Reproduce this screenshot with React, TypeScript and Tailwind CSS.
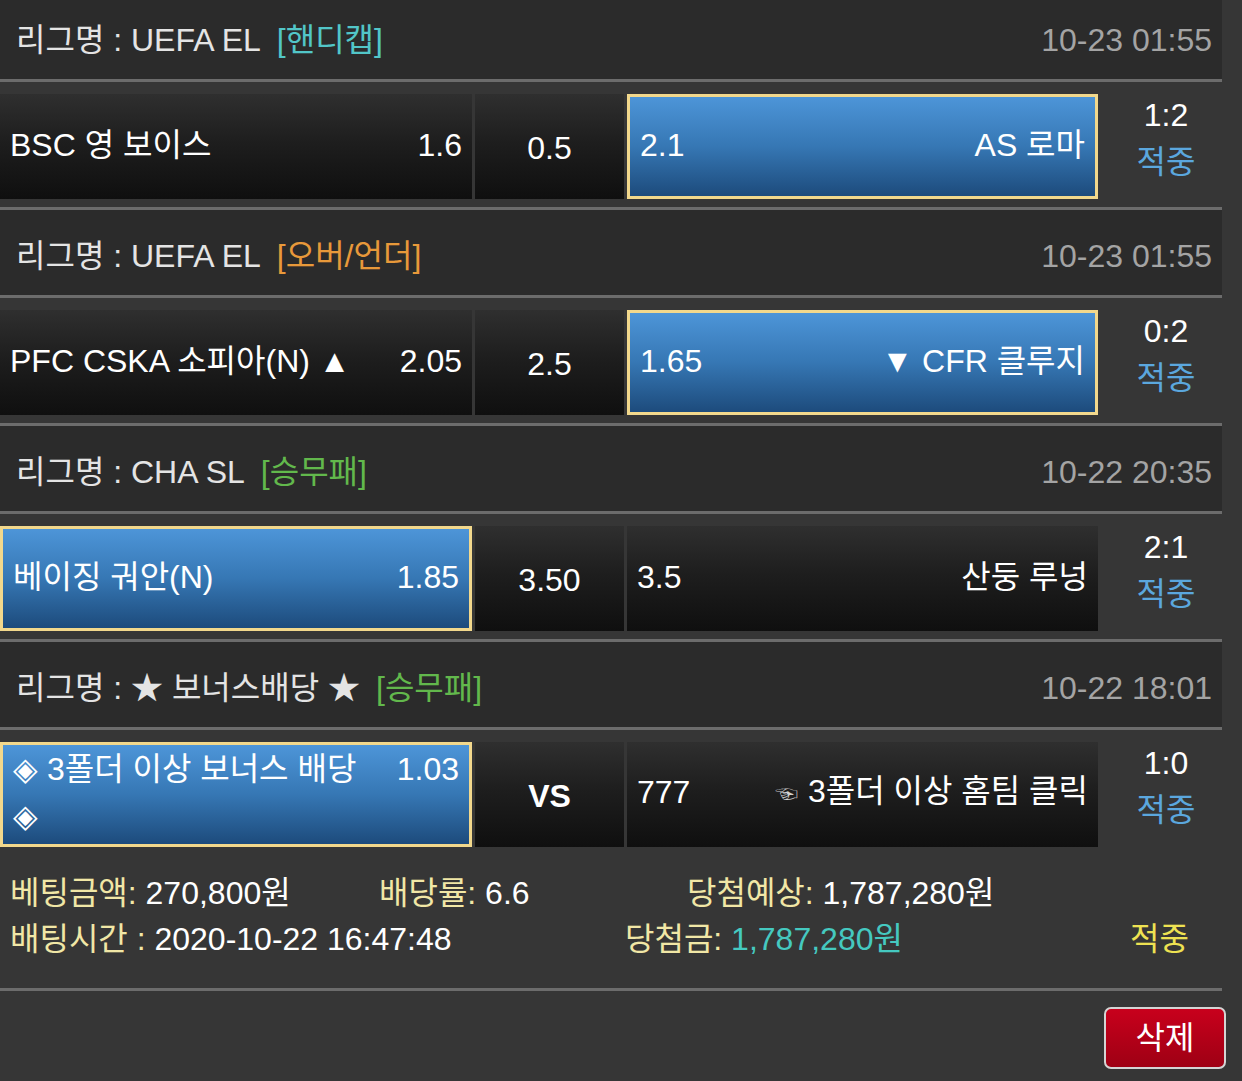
import type { ReactNode } from "react";

type Side = {
  left: ReactNode;
  right: ReactNode;
  picked?: boolean;
};

type Game = {
  league: string;
  tag: string;
  tagClass: string;
  time: string;
  home: Side;
  draw: ReactNode;
  away: Side;
  score: string;
  multiline?: boolean;
};

const games: Game[] = [
  {
    league: "리그명 : UEFA EL",
    tag: "[핸디캡]",
    tagClass: "text-[#52c6c8]",
    time: "10-23 01:55",
    home: { left: "BSC 영 보이스", right: "1.6" },
    draw: "0.5",
    away: { left: "2.1", right: "AS 로마", picked: true },
    score: "1:2",
  },
  {
    league: "리그명 : UEFA EL",
    tag: "[오버/언더]",
    tagClass: "text-[#e8993a]",
    time: "10-23 01:55",
    home: { left: "PFC CSKA 소피아(N) ▲", right: "2.05" },
    draw: "2.5",
    away: { left: "1.65", right: "▼ CFR 클루지", picked: true },
    score: "0:2",
  },
  {
    league: "리그명 : CHA SL",
    tag: "[승무패]",
    tagClass: "text-[#62b84c]",
    time: "10-22 20:35",
    home: { left: "베이징 궈안(N)", right: "1.85", picked: true },
    draw: "3.50",
    away: { left: "3.5", right: "산둥 루넝" },
    score: "2:1",
  },
  {
    league: "리그명 : ★ 보너스배당 ★",
    tag: "[승무패]",
    tagClass: "text-[#62b84c]",
    time: "10-22 18:01",
    home: {
      left: (
        <>
          ◈ 3폴더 이상 보너스 배당
          <br />◈
        </>
      ),
      right: "1.03",
      picked: true,
    },
    draw: <span className="font-bold">VS</span>,
    away: {
      left: "777",
      right: (
        <>
          <span className="mr-[10px] align-middle text-[23px] text-[#d0d0d0]">☜</span>
          3폴더 이상 홈팀 클릭
        </>
      ),
    },
    score: "1:0",
    multiline: true,
  },
];

const darkCell = "bg-[linear-gradient(to_bottom,#2f2f2f_0%,#1e1e1e_45%,#0f0f0f_100%)]";
const pickedCell =
  "border-[3px] border-[#f2d88c] bg-[linear-gradient(to_bottom,#4d95d8_0%,#3677b4_50%,#1d4b7c_100%)]";

function SideCell({ side, width, multiline }: { side: Side; width: string; multiline?: boolean }) {
  return (
    <div
      className={`${width} flex h-[105px] flex-none items-center px-[10px] pb-[4px] ${
        side.picked ? pickedCell : darkCell
      }`}
    >
      <div
        className={`flex w-full justify-between gap-4 ${
          multiline ? "items-start leading-[47px]" : "items-center leading-[38px]"
        }`}
      >
        <span>{side.left}</span>
        <span className="flex-none">{side.right}</span>
      </div>
    </div>
  );
}

function Header({ game }: { game: Game }) {
  return (
    <div className="flex h-[85px] items-center justify-between bg-[#2b2b2b] pr-[10px] pl-[16px] pt-[6px]">
      <div className="text-[#e4e4e4]">
        {game.league}
        <span className={`ml-[16px] ${game.tagClass}`}>{game.tag}</span>
      </div>
      <div className="text-[#a4a4a4]">{game.time}</div>
    </div>
  );
}

function Row({ game }: { game: Game }) {
  return (
    <div className="flex h-[125px] items-start pt-[12px]">
      <SideCell side={game.home} width="w-[472px]" multiline={game.multiline} />
      <div className={`ml-[3px] flex h-[105px] w-[149px] flex-none items-center justify-center pt-[2px] ${darkCell}`}>
        {game.draw}
      </div>
      <SideCell side={game.away} width="ml-[3px] w-[471px]" />
      <div className="-mt-[2px] flex w-[124px] flex-none flex-col items-center pl-[12px] leading-[47px]">
        <span className="text-white">{game.score}</span>
        <span className="text-[#5ba7de]">적중</span>
      </div>
    </div>
  );
}

const Sep = () => <div className="h-[3px] bg-[#6c6c6c]" />;

export default function App() {
  return (
    <div
      className="min-h-[1081px] w-[1242px] overflow-hidden bg-[#363636] text-[32px] text-white"
      style={{ fontFamily: '"Liberation Sans", "Noto Sans CJK KR", sans-serif' }}
    >
      <div className="-mt-[6px] w-[1222px]">
        {games.map((g, i) => (
          <div key={i}>
            {i > 0 && <Sep />}
            <Header game={g} />
            <Sep />
            <Row game={g} />
          </div>
        ))}
        <div className="flex h-[133px] flex-col justify-center pb-[12px] leading-[46px]">
          <div className="flex">
            <span className="w-[379px] flex-none pl-[10px]">
              <span className="text-[#f1e7a6]">베팅금액:</span> 270,800원
            </span>
            <span className="w-[308px] flex-none">
              <span className="text-[#f1e7a6]">배당률:</span> 6.6
            </span>
            <span>
              <span className="text-[#f1e7a6]">당첨예상:</span> 1,787,280원
            </span>
          </div>
          <div className="flex">
            <span className="w-[625px] flex-none pl-[10px]">
              <span className="text-[#f1e7a6]">배팅시간 :</span> 2020-10-22 16:47:48
            </span>
            <span className="w-[505px] flex-none">
              <span className="text-[#f1e7a6]">당첨금:</span>{" "}
              <span className="text-[#45c9c0]">1,787,280원</span>
            </span>
            <span className="text-[#eee252]">적중</span>
          </div>
        </div>
        <Sep />
      </div>
      <div className="flex justify-end pt-[16px] pr-[16px]">
        <button className="flex h-[62px] w-[122px] items-center justify-center rounded-[7px] border-2 border-[#d4d4d4] bg-[linear-gradient(to_bottom,#c8001c,#9e0014)] text-white">
          삭제
        </button>
      </div>
    </div>
  );
}
